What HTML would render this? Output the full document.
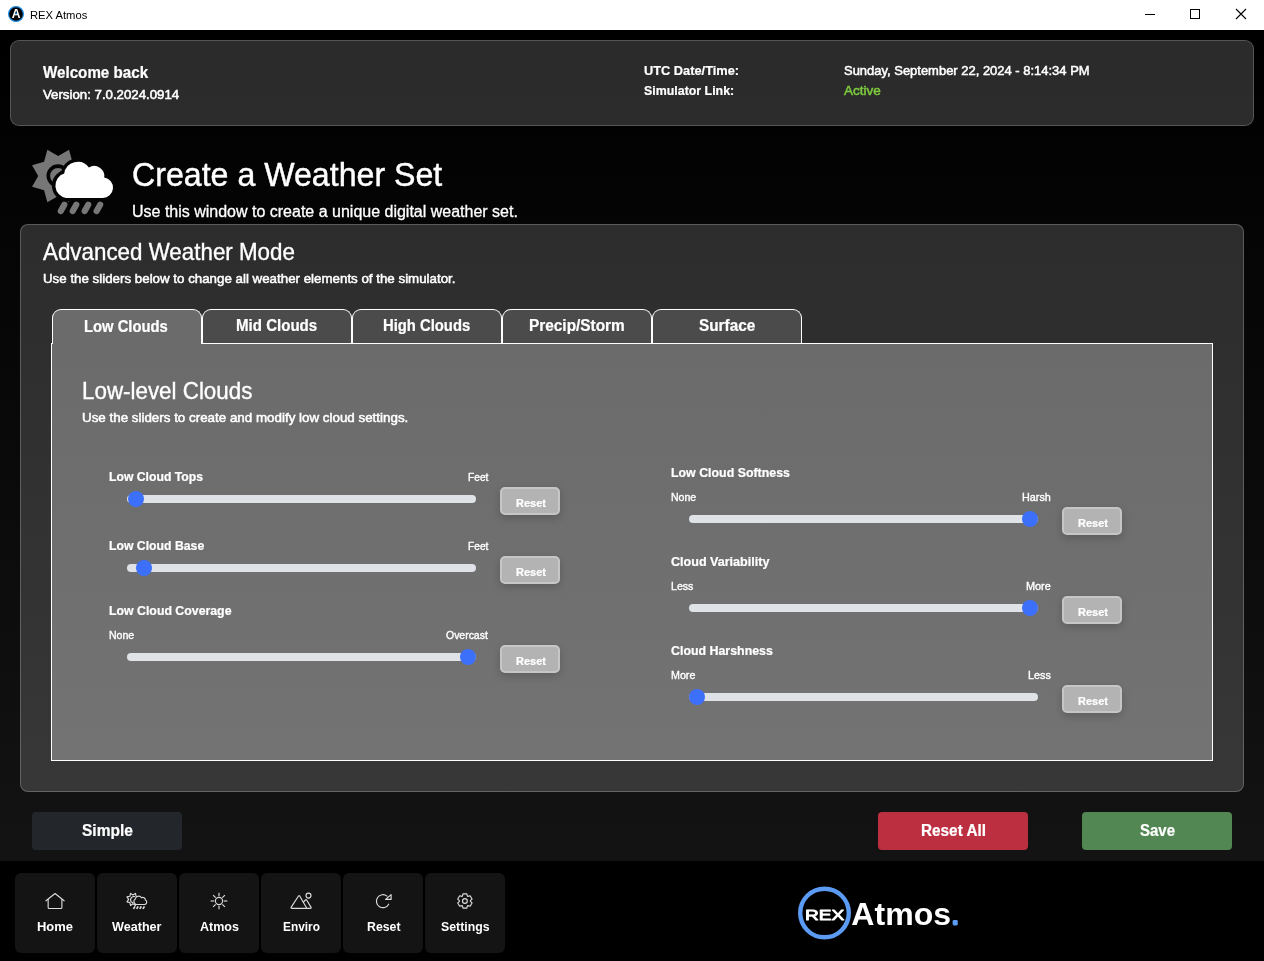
<!DOCTYPE html>
<html lang="en">
<head>
<meta charset="utf-8">
<title>REX Atmos</title>
<style>
*{box-sizing:border-box;margin:0;padding:0}
html,body{width:1264px;height:961px;overflow:hidden;background:#050505}
body{font-family:"Liberation Sans",Arial,sans-serif;color:#fff;position:relative}
.titlebar{position:absolute;left:0;top:0;width:1264px;height:30px;background:#fff;color:#000}
.titlebar .tt{position:absolute;left:29px;top:7px;font-size:12px;line-height:16px;color:#000;letter-spacing:-0.1px}
.main{position:absolute;left:0;top:30px;width:1264px;height:831px;background:linear-gradient(180deg,#000 0%,#131313 100%)}
.nav{position:absolute;left:0;top:861px;width:1264px;height:100px;background:#000}
.hdr{position:absolute;left:10px;top:40px;width:1244px;height:86px;background:rgba(255,255,255,.168);border:1px solid rgba(255,255,255,.2);border-radius:9px}
.t{position:absolute;white-space:nowrap;line-height:1;transform-origin:0 50%}
.b{font-weight:bold}
.panel{position:absolute;left:20px;top:224px;width:1224px;height:568px;background:rgba(255,255,255,.16);border:1px solid rgba(255,255,255,.22);border-radius:8px}
.tab{position:absolute;top:309px;height:34px;width:150px;border:1px solid #fff;border-bottom:none;border-radius:9px 9px 0 0;background:#4b4b4b}
.tab.act{background:#6b6b6b;height:35px}
.content{position:absolute;left:51px;top:343px;width:1162px;height:418px;background:linear-gradient(180deg,#6b6b6b,#737373);border:1px solid #fff}
.track{position:absolute;height:8px;width:349px;border-radius:4px;background:#dfe3e8}
.thumb{position:absolute;width:16px;height:16px;border-radius:50%;background:#3d70fa}
.rbtn{position:absolute;width:60px;height:28px;background:#b3b3b3;border:2px solid #c6c6c6;border-radius:5px;box-shadow:0 3px 8px rgba(0,0,0,.18)}
.big{position:absolute;top:812px;width:150px;height:38px;border-radius:4px}
.nb{position:absolute;top:873px;width:80px;height:80px;background:#141414;border-radius:6px}
svg{position:absolute;overflow:visible}
.layer{position:absolute;left:0;top:0;width:1264px;height:961px;will-change:transform}
</style>
</head>
<body>
<div class="titlebar">
<!--TITLEICONS-->
</div>
<div class="main"></div>
<div class="nav"></div>
<div class="hdr"></div>
<!--WEATHERICON-->
<div class="panel"></div>
<div class="content"></div>
<div class="tab act" style="left:52px"></div>
<div class="tab" style="left:202px"></div>
<div class="tab" style="left:352px"></div>
<div class="tab" style="left:502px"></div>
<div class="tab" style="left:652px"></div>

<div class="track" style="left:127px;top:495px"></div><div class="thumb" style="left:128px;top:491px"></div><div class="rbtn" style="left:500px;top:487px"></div>
<div class="track" style="left:127px;top:564px"></div><div class="thumb" style="left:136px;top:560px"></div><div class="rbtn" style="left:500px;top:556px"></div>
<div class="track" style="left:127px;top:653px"></div><div class="thumb" style="left:460px;top:649px"></div><div class="rbtn" style="left:500px;top:645px"></div>

<div class="track" style="left:689px;top:515px"></div><div class="thumb" style="left:1022px;top:511px"></div><div class="rbtn" style="left:1062px;top:507px"></div>
<div class="track" style="left:689px;top:604px"></div><div class="thumb" style="left:1022px;top:600px"></div><div class="rbtn" style="left:1062px;top:596px"></div>
<div class="track" style="left:689px;top:693px"></div><div class="thumb" style="left:689px;top:689px"></div><div class="rbtn" style="left:1062px;top:685px"></div>

<div class="big" style="left:32px;background:#23272b"></div>
<div class="big" style="left:878px;background:#bb2f41"></div>
<div class="big" style="left:1082px;background:#528753"></div>

<div class="nb" style="left:15px"></div>
<div class="nb" style="left:97px"></div>
<div class="nb" style="left:179px"></div>
<div class="nb" style="left:261px"></div>
<div class="nb" style="left:343px"></div>
<div class="nb" style="left:425px"></div>
<div class="layer">
<svg width="1264" height="961" viewBox="0 0 1264 961" style="left:0;top:0">
<circle cx="16" cy="14" r="7.4" fill="#000" stroke="#1e8fe6" stroke-width="1.2"/>
<text x="11.7" y="18.1" font-family="'Liberation Sans',sans-serif" font-weight="bold" font-size="13.2" fill="#fff" textLength="8.8" lengthAdjust="spacingAndGlyphs">A</text>
<circle cx="16.2" cy="13.6" r="0.9" fill="#2b8fe8"/>
<path d="M1145,14.5 H1155" stroke="#000" stroke-width="1"/>
<rect x="1190.5" y="9.5" width="9" height="9" fill="none" stroke="#000" stroke-width="1"/>
<path d="M1236,9 L1246,19 M1246,9 L1236,19" stroke="#000" stroke-width="1.1"/>
<polygon fill="#777" points="84.35,165.17 72.34,161.86 69.03,149.85 58.20,156.00 47.37,149.85 44.06,161.86 32.05,165.17 38.20,176.00 32.05,186.83 44.06,190.14 47.37,202.15 58.20,196.00 69.03,202.15 72.34,190.14 84.35,186.83 78.20,176.00"/>
<circle cx="58" cy="175.8" r="9.7" fill="none" stroke="#050505" stroke-width="3.6"/>
<path d="M66,197.9 A12.5,12.5 0 0 1 64.2,173.6 A13.7,13.7 0 0 1 88.9,167.5 A10.1,10.1 0 0 1 104.2,177.6 A10.2,10.2 0 0 1 102.5,197.9 Z" fill="#050505" stroke="#050505" stroke-width="7" stroke-linejoin="round"/>
<path d="M66,197.9 A12.5,12.5 0 0 1 64.2,173.6 A13.7,13.7 0 0 1 88.9,167.5 A10.1,10.1 0 0 1 104.2,177.6 A10.2,10.2 0 0 1 102.5,197.9 Z" fill="#fff"/>
<path d="M64.30,204.8 l-3.5,6.2" stroke="#777" stroke-width="6.2" stroke-linecap="round"/>
<path d="M76.25,204.8 l-3.5,6.2" stroke="#777" stroke-width="6.2" stroke-linecap="round"/>
<path d="M88.20,204.8 l-3.5,6.2" stroke="#777" stroke-width="6.2" stroke-linecap="round"/>
<path d="M100.15,204.8 l-3.5,6.2" stroke="#777" stroke-width="6.2" stroke-linecap="round"/>
<g fill="none" stroke="#dcdcdc" stroke-width="1.15" stroke-linecap="round" stroke-linejoin="round">
<path d="M46,900.8 L55.05,893.5 L64.1,900.8"/><path d="M48.15,899.4 V907.4 a1.1,1.1 0 0 0 1.1,1.1 H60.8 a1.1,1.1 0 0 0 1.1,-1.1 V899.4"/>
<polygon points="139.01,896.91 136.11,896.29 135.49,893.39 133.00,895.00 130.51,893.39 129.89,896.29 126.99,896.91 128.60,899.40 126.99,901.89 129.89,902.51 130.51,905.41 133.00,903.80 135.49,905.41 136.11,902.51 139.01,901.89 137.40,899.40"/>
<path d="M134.6,896.6 A3.1,3.1 0 0 0 132.9,902.6"/>
<path fill="#141414" d="M136.4,904.5 A3.0,3.0 0 0 1 135.3,899.0 A3.4,3.4 0 0 1 141.5,897.7 A2.7,2.7 0 0 1 145.4,899.9 A2.45,2.45 0 0 1 144.8,904.5 Z"/>
</g>
<g stroke="#dcdcdc" stroke-width="1.7" fill="none">
<path d="M135.00,906.3 l-1.5,2.6"/>
<path d="M138.15,906.3 l-1.5,2.6"/>
<path d="M141.30,906.3 l-1.5,2.6"/>
<path d="M144.45,906.3 l-1.5,2.6"/>
</g>
<g fill="none" stroke="#dcdcdc" stroke-width="1.15" stroke-linecap="butt">
<circle cx="219" cy="901" r="3.6"/>
<path d="M223.75,901.00 L227.35,901.00"/>
<path d="M222.36,897.64 L224.90,895.10"/>
<path d="M219.00,896.25 L219.00,892.65"/>
<path d="M215.64,897.64 L213.10,895.10"/>
<path d="M214.25,901.00 L210.65,901.00"/>
<path d="M215.64,904.36 L213.10,906.90"/>
<path d="M219.00,905.75 L219.00,909.35"/>
<path d="M222.36,904.36 L224.90,906.90"/>
</g>
<g fill="none" stroke="#dcdcdc" stroke-width="1.15" stroke-linecap="round" stroke-linejoin="round">
<path d="M306.8,908.3 H291.6 a0.6,0.6 0 0 1 -0.5,-0.9 L298.5,896 a0.7,0.7 0 0 1 1.2,0 L306.8,908.3 H310.6 a0.6,0.6 0 0 0 0.5,-0.9 L306.6,900 a0.7,0.7 0 0 0 -1.2,0 L303.7,901.9"/>
<circle cx="308.5" cy="895.6" r="2.5"/>
</g>
<g fill="none" stroke="#dcdcdc" stroke-width="1.15" stroke-linecap="round" stroke-linejoin="round">
<path d="M387.0,896.1 A6.5,6.5 0 1 0 388.7,904.2"/>
<path d="M391.1,894.6 V899.4 H385.6 Z"/>
</g>
<g fill="none" stroke="#dcdcdc" stroke-width="1.15" stroke-linejoin="round">
<polygon points="467.40,896.10 466.82,893.85 462.98,893.85 462.40,896.10 461.90,896.39 459.67,895.77 457.75,899.08 459.41,900.71 459.41,901.29 457.75,902.92 459.67,906.23 461.90,905.61 462.40,905.90 462.98,908.15 466.82,908.15 467.40,905.90 467.90,905.61 470.13,906.23 472.05,902.92 470.39,901.29 470.39,900.71 472.05,899.08 470.13,895.77 467.90,896.39"/>
<circle cx="464.9" cy="901" r="2.4"/>
</g>
<circle cx="824.5" cy="913" r="24.3" fill="none" stroke="#5b9bf3" stroke-width="4.4"/>
<text x="805" y="920" font-family="'Liberation Sans',sans-serif" font-size="15.2" fill="#fff" stroke="#fff" stroke-width="0.9" stroke-linejoin="round" textLength="39.3" lengthAdjust="spacingAndGlyphs">REX</text>
<text x="851.3" y="924.8" font-family="'Liberation Sans',sans-serif" font-size="30.8" font-weight="bold" fill="#fff" textLength="99.8" lengthAdjust="spacingAndGlyphs">Atmos</text>
<text x="953.1" y="923.5" font-family="'Liberation Sans',sans-serif" font-size="16" font-weight="bold" fill="#5b9bf3" stroke="#5b9bf3" stroke-width="2.9" stroke-linejoin="round">.</text>
</svg>
<div class="t" style="left:29.6px;top:9.00px;font-size:11.7px;transform:scaleX(0.9587);color:#000">REX Atmos</div>
<div class="t b" style="left:43.2px;top:65.00px;font-size:15.8px;transform:scaleX(0.9601);-webkit-text-stroke:0.22px #fff">Welcome back</div>
<div class="t" style="left:43.2px;top:89.00px;font-size:12.6px;transform:scaleX(1.0514);-webkit-text-stroke:0.55px #fff">Version: 7.0.2024.0914</div>
<div class="t b" style="left:644.0px;top:65.00px;font-size:12.6px;transform:scaleX(1.0166);-webkit-text-stroke:0.2px #fff">UTC Date/Time:</div>
<div class="t b" style="left:644.0px;top:85.00px;font-size:12.6px;transform:scaleX(0.9839);-webkit-text-stroke:0.2px #fff">Simulator Link:</div>
<div class="t" style="left:844.1px;top:65.00px;font-size:12.6px;transform:scaleX(1.0298);-webkit-text-stroke:0.5px #fff">Sunday, September 22, 2024 - 8:14:34 PM</div>
<div class="t" style="left:844.1px;top:85.00px;font-size:12.6px;transform:scaleX(1.0701);color:#7dca3e;-webkit-text-stroke:0.5px #7dca3e">Active</div>
<div class="t" style="left:132.0px;top:158.00px;font-size:33.6px;transform:scaleX(0.9573);-webkit-text-stroke:0.45px #fff">Create a Weather Set</div>
<div class="t" style="left:131.8px;top:204.00px;font-size:16px;transform:scaleX(0.9997);-webkit-text-stroke:0.3px #fff">Use this window to create a unique digital weather set.</div>
<div class="t" style="left:43.0px;top:241.00px;font-size:23.6px;transform:scaleX(0.9477);-webkit-text-stroke:0.35px #fff">Advanced Weather Mode</div>
<div class="t" style="left:43.3px;top:273.00px;font-size:12.6px;transform:scaleX(1.0579);-webkit-text-stroke:0.5px #fff">Use the sliders below to change all weather elements of the simulator.</div>
<div class="t b" style="left:84.4px;top:319.00px;font-size:15.8px;transform:scaleX(0.9361);-webkit-text-stroke:0.22px #fff">Low Clouds</div>
<div class="t b" style="left:236.3px;top:318.00px;font-size:15.8px;transform:scaleX(0.9539);-webkit-text-stroke:0.22px #fff">Mid Clouds</div>
<div class="t b" style="left:382.8px;top:318.00px;font-size:15.8px;transform:scaleX(0.9375);-webkit-text-stroke:0.22px #fff">High Clouds</div>
<div class="t b" style="left:528.7px;top:318.00px;font-size:15.8px;transform:scaleX(0.9743);-webkit-text-stroke:0.22px #fff">Precip/Storm</div>
<div class="t b" style="left:698.6px;top:318.00px;font-size:15.8px;transform:scaleX(0.9715);-webkit-text-stroke:0.22px #fff">Surface</div>
<div class="t" style="left:81.6px;top:380.00px;font-size:23.6px;transform:scaleX(0.9484);-webkit-text-stroke:0.35px #fff">Low-level Clouds</div>
<div class="t" style="left:82.0px;top:412.00px;font-size:12.6px;transform:scaleX(1.0618);-webkit-text-stroke:0.5px #fff">Use the sliders to create and modify low cloud settings.</div>
<div class="t b" style="left:109.0px;top:471.00px;font-size:12.6px;transform:scaleX(0.9691);-webkit-text-stroke:0.22px #fff">Low Cloud Tops</div>
<div class="t" style="left:467.8px;top:472.00px;font-size:11.2px;transform:scaleX(0.9111);-webkit-text-stroke:0.38px #fff">Feet</div>
<div class="t b" style="left:109.0px;top:540.00px;font-size:12.6px;transform:scaleX(0.9717);-webkit-text-stroke:0.22px #fff">Low Cloud Base</div>
<div class="t" style="left:467.8px;top:541.00px;font-size:11.2px;transform:scaleX(0.9111);-webkit-text-stroke:0.38px #fff">Feet</div>
<div class="t b" style="left:109.0px;top:605.00px;font-size:12.6px;transform:scaleX(0.9780);-webkit-text-stroke:0.22px #fff">Low Cloud Coverage</div>
<div class="t" style="left:109.0px;top:630.00px;font-size:11.2px;transform:scaleX(0.9421);-webkit-text-stroke:0.38px #fff">None</div>
<div class="t" style="left:446.4px;top:630.00px;font-size:11.2px;transform:scaleX(0.9338);-webkit-text-stroke:0.38px #fff">Overcast</div>
<div class="t b" style="left:671.0px;top:467.00px;font-size:12.6px;transform:scaleX(0.9823);-webkit-text-stroke:0.22px #fff">Low Cloud Softness</div>
<div class="t" style="left:671.0px;top:492.00px;font-size:11.2px;transform:scaleX(0.9421);-webkit-text-stroke:0.38px #fff">None</div>
<div class="t" style="left:1021.8px;top:492.00px;font-size:11.2px;transform:scaleX(0.9650);-webkit-text-stroke:0.38px #fff">Harsh</div>
<div class="t b" style="left:671.0px;top:556.00px;font-size:12.6px;transform:scaleX(0.9972);-webkit-text-stroke:0.22px #fff">Cloud Variability</div>
<div class="t" style="left:671.0px;top:581.00px;font-size:11.2px;transform:scaleX(0.9475);-webkit-text-stroke:0.38px #fff">Less</div>
<div class="t" style="left:1025.8px;top:581.00px;font-size:11.2px;transform:scaleX(0.9725);-webkit-text-stroke:0.38px #fff">More</div>
<div class="t b" style="left:671.0px;top:645.00px;font-size:12.6px;transform:scaleX(0.9838);-webkit-text-stroke:0.22px #fff">Cloud Harshness</div>
<div class="t" style="left:671.0px;top:670.00px;font-size:11.2px;transform:scaleX(0.9569);-webkit-text-stroke:0.38px #fff">More</div>
<div class="t" style="left:1027.8px;top:670.00px;font-size:11.2px;transform:scaleX(0.9644);-webkit-text-stroke:0.38px #fff">Less</div>
<div class="t b" style="left:515.7px;top:498.00px;font-size:10.6px;transform:scaleX(1.0361);-webkit-text-stroke:0.22px #fff">Reset</div>
<div class="t b" style="left:515.7px;top:567.00px;font-size:10.6px;transform:scaleX(1.0361);-webkit-text-stroke:0.22px #fff">Reset</div>
<div class="t b" style="left:515.7px;top:656.00px;font-size:10.6px;transform:scaleX(1.0361);-webkit-text-stroke:0.22px #fff">Reset</div>
<div class="t b" style="left:1077.7px;top:518.00px;font-size:10.6px;transform:scaleX(1.0361);-webkit-text-stroke:0.22px #fff">Reset</div>
<div class="t b" style="left:1077.7px;top:607.00px;font-size:10.6px;transform:scaleX(1.0361);-webkit-text-stroke:0.22px #fff">Reset</div>
<div class="t b" style="left:1077.7px;top:696.00px;font-size:10.6px;transform:scaleX(1.0361);-webkit-text-stroke:0.22px #fff">Reset</div>
<div class="t b" style="left:81.6px;top:823.00px;font-size:15.8px;transform:scaleX(0.9827);-webkit-text-stroke:0.22px #fff">Simple</div>
<div class="t b" style="left:920.5px;top:823.00px;font-size:15.8px;transform:scaleX(0.9699);-webkit-text-stroke:0.22px #fff">Reset All</div>
<div class="t b" style="left:1139.5px;top:823.00px;font-size:15.8px;transform:scaleX(0.9483);-webkit-text-stroke:0.22px #fff">Save</div>
<div class="t b" style="left:37.0px;top:921.00px;font-size:12.6px;transform:scaleX(1.0286)">Home</div>
<div class="t b" style="left:112.0px;top:921.00px;font-size:12.6px;transform:scaleX(1.0006)">Weather</div>
<div class="t b" style="left:199.5px;top:921.00px;font-size:12.6px;transform:scaleX(0.9952)">Atmos</div>
<div class="t b" style="left:282.5px;top:921.00px;font-size:12.6px;transform:scaleX(0.9438)">Enviro</div>
<div class="t b" style="left:366.5px;top:921.00px;font-size:12.6px;transform:scaleX(0.9763)">Reset</div>
<div class="t b" style="left:440.5px;top:921.00px;font-size:12.6px;transform:scaleX(0.9761)">Settings</div>
</div>
</body>
</html>
